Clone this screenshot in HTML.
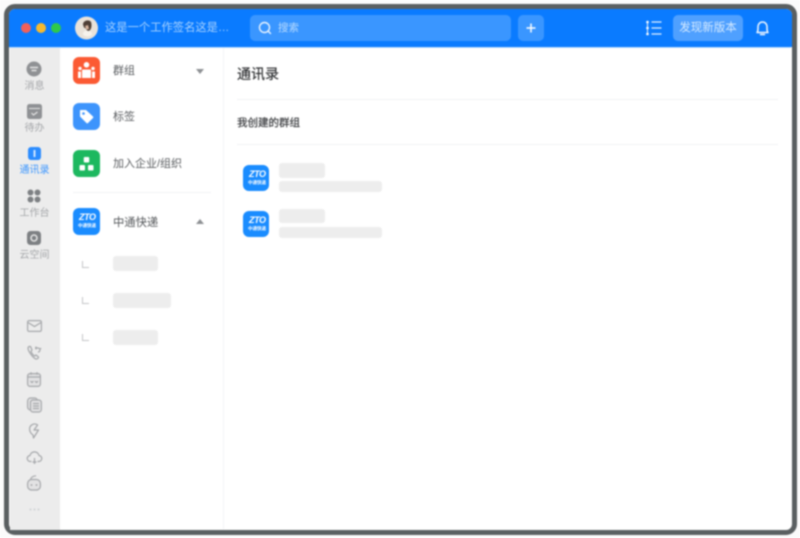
<!DOCTYPE html>
<html lang="zh">
<head>
<meta charset="utf-8">
<style>
html,body{margin:0;padding:0;background:#fff}
body{width:800px;height:538px;overflow:hidden;position:relative;font-family:"Liberation Sans","Noto Sans CJK SC",sans-serif}
#root{position:absolute;left:0;top:0;width:800px;height:538px;filter:blur(.85px);background:#fbfbfb}
.a{position:absolute}
.frame{left:3.5px;top:3.5px;width:793px;height:531px;box-sizing:border-box;border:5px solid #5a5f61;border-radius:11px;background:#fff;overflow:hidden}
.t{position:absolute;white-space:nowrap;line-height:16px}
.sk{position:absolute;background:#ededed;border-radius:3px}
.ln{position:absolute;height:1px;background:#f1f2f4}
.nav{position:absolute;left:9px;width:51px;text-align:center;font-size:10px;color:#a5a7aa;line-height:12px}
.l{position:absolute;left:82px;width:6px;height:6px;border-left:1.5px solid #c4c5c7;border-bottom:1.5px solid #c4c5c7}
svg{position:absolute;overflow:visible}
.ic{position:absolute;border-radius:6px}
.z{position:absolute;font-size:9px;line-height:9px;font-weight:bold;font-style:italic;color:#fff;letter-spacing:-.4px}
.zs{position:absolute;font-size:4.500px;line-height:5px;font-weight:bold;color:#fff;white-space:nowrap}
</style>
</head>
<body>
<div id="root">
<div class="a frame"></div>

<!-- top bar -->
<div class="a" style="left:8.500px;top:8.500px;width:783px;height:38.500px;background:#0a7bff;border-radius:6px 6px 0 0"></div>
<div class="a" style="left:9px;top:47px;width:782px;height:1px;background:#b9dcff"></div>
<div class="a" style="left:21px;top:23px;width:10px;height:10px;border-radius:50%;background:#f0605a"></div>
<div class="a" style="left:36px;top:23px;width:10px;height:10px;border-radius:50%;background:#f6b92d"></div>
<div class="a" style="left:51px;top:23px;width:10px;height:10px;border-radius:50%;background:#2fc94a"></div>
<svg style="left:75px;top:16px" width="23" height="24" viewBox="0 0 23 23">
<circle cx="11.500" cy="11.500" r="11.500" fill="#e9e2d9"/>
<path d="M8 18c0-3 2-4 4-4s5 1 5 4c-2 2.500-7 2.500-9 0z" fill="#f6f2ec"/>
<path d="M8 8c0-4 6-5.500 8-2.500 1 3 .5 7-1.500 8.500-2 1-3-.5-3.500-2L9 11z" fill="#4f3f35"/>
<path d="M10 9.500l3-1 1 4-2.500.5z" fill="#d8b39c"/>
</svg>
<div class="t" style="left:105px;top:20px;font-size:11.300px;color:#a8d2ff">这是一个工作签名这是…</div>
<div class="a" style="left:250px;top:15px;width:261px;height:26px;border-radius:5px;background:#3a96ff"></div>
<svg style="left:258px;top:21px" width="14" height="14" viewBox="0 0 14 14" fill="none" stroke="#e8f3ff" stroke-width="1.400"><circle cx="6.500" cy="6.500" r="5"/><path d="M10 10l2.500 2.500" stroke-linecap="round"/></svg>
<div class="t" style="left:278px;top:20px;font-size:10.500px;color:#b8dbff">搜索</div>
<div class="a" style="left:518px;top:15px;width:26px;height:26px;border-radius:5px;background:#3a96ff"></div>
<svg style="left:525px;top:22px" width="12" height="12" viewBox="0 0 12 12" stroke="#fff" stroke-width="1.500"><path d="M6 1.500v9M1.500 6h9"/></svg>
<svg style="left:646px;top:20px" width="16" height="16" viewBox="0 0 16 16" fill="none" stroke="#e6f2ff" stroke-width="1.300"><path d="M5.500 2h10M5.500 8h10M5.500 14h10"/><path d="M1.500 1v14" stroke-width="1"/><circle cx="1.500" cy="2" r="1.300" fill="#fff" stroke="none"/><circle cx="1.500" cy="8" r="1.300" fill="#fff" stroke="none"/><circle cx="1.500" cy="14" r="1.300" fill="#fff" stroke="none"/></svg>
<div class="a" style="left:673px;top:15px;width:70px;height:26px;border-radius:5px;background:#4fa0ff"></div>
<div class="t" style="left:673px;top:20px;width:70px;text-align:center;font-size:11.500px;color:#d6eaff">发现新版本</div>
<svg style="left:755px;top:20px" width="15" height="16" viewBox="0 0 15 16" fill="none" stroke="#f2f8ff" stroke-width="1.500"><path d="M2 12.500c1-1 1-2.500 1-5.500 0-3 2-5 4.500-5S12 4 12 7c0 3 0 4.500 1 5.500z" stroke-linejoin="round"/><path d="M5.500 14.500h4" stroke-linecap="round"/></svg>

<!-- left rail -->
<div class="a" style="left:9.500px;top:48px;width:50.500px;height:481.500px;background:#ececec"></div>

<svg style="left:26px;top:61px" width="16" height="16" viewBox="0 0 16 16"><circle cx="8" cy="8" r="7.500" fill="#8f9194"/><path d="M4 6.500h8M5.500 9.500h5" stroke="#e6e6e6" stroke-width="1.500"/></svg>
<div class="nav" style="top:81px">消息</div>
<svg style="left:27px;top:104px" width="15" height="15" viewBox="0 0 15 15"><rect width="15" height="15" rx="2.500" fill="#8f9194"/><path d="M2 4.500h11" stroke="#e6e6e6" stroke-width="1"/><path d="M4.500 9l2 2 4-3" stroke="#e6e6e6" stroke-width="1.200" fill="none"/></svg>
<div class="nav" style="top:123px">待办</div>
<svg style="left:28px;top:147px" width="13" height="13" viewBox="0 0 13 13"><rect width="13" height="13" rx="3" fill="#2b8cff"/><rect x="5.500" y="3" width="2" height="7" fill="#cfe5ff"/></svg>
<div class="nav" style="top:165px;color:#3d97ff">通讯录</div>
<svg style="left:27px;top:189px" width="14" height="14" viewBox="0 0 14 14" fill="#7d8083"><circle cx="3.500" cy="3.500" r="3"/><circle cx="10.500" cy="3.500" r="3"/><circle cx="3.500" cy="10.500" r="3"/><circle cx="10.500" cy="10.500" r="3"/></svg>
<div class="nav" style="top:208px">工作台</div>
<svg style="left:27px;top:231px" width="14" height="14" viewBox="0 0 14 14"><rect width="14" height="14" rx="3.500" fill="#7d8083"/><circle cx="7" cy="7" r="3" fill="none" stroke="#e6e6e6" stroke-width="1.500"/></svg>
<div class="nav" style="top:250px">云空间</div>

<svg style="left:27px;top:320px" width="15" height="12" viewBox="0 0 15 12" fill="none" stroke="#a5a7aa" stroke-width="1.200"><rect x=".6" y=".6" width="13.800" height="10.800" rx="1.500"/><path d="M1 2.500l6.500 4 6.500-4"/></svg>
<svg style="left:27px;top:345px" width="15" height="15" viewBox="0 0 15 15" fill="none" stroke="#a5a7aa" stroke-width="1.200"><path d="M2 1.500c-1.500 1-1 3.500 1 6.500s4 5.500 6 6c1.500.3 2.500-1 2.500-2l-2.500-2-1.500 1c-1-.5-3-3-3.500-4.500L5 5 3.500 1.500z"/><path d="M8 3h3a2 2 0 0 1 0 4M9 1.500v3M13.500 3l.5 1"/></svg>
<svg style="left:27px;top:372px" width="14" height="15" viewBox="0 0 14 15" fill="#e2e2e3" stroke="#a5a7aa" stroke-width="1.200"><rect x=".6" y="1.600" width="12.800" height="12.800" rx="2.500"/><path d="M.6 5h12.800M4 .3v2.500M10 .3v2.500M3.500 9l1.500 1.500L6.500 9M8 9l1.500 1.500L11 9" fill="none"/></svg>
<svg style="left:27px;top:397px" width="15" height="16" viewBox="0 0 15 16" fill="#e2e2e3" stroke="#a5a7aa" stroke-width="1.200"><rect x=".6" y="1" width="10" height="12" rx="3"/><rect x="3.500" y="3" width="10.800" height="12" rx="2.500"/><path d="M6 6.500h6M6 9h6M6 11.500h6" fill="none"/></svg>
<svg style="left:29px;top:423px" width="11" height="16" viewBox="0 0 11 16" fill="none" stroke="#a5a7aa" stroke-width="1.200"><path d="M4 12C1 10 .6 8 .6 6a5 5 0 0 1 8-4L5 7h4.500L4.500 15z" stroke-linejoin="round"/></svg>
<svg style="left:27px;top:450px" width="15" height="15" viewBox="0 0 15 15" fill="none" stroke="#a5a7aa" stroke-width="1.200"><path d="M4.500 11.500H3.500a3 3 0 0 1-.5-6 4.600 4.600 0 0 1 9 0 3 3 0 0 1-.5 6h-1"/><path d="M7.500 8v6M5.500 12h4"/></svg>
<svg style="left:27px;top:475px" width="14" height="16" viewBox="0 0 14 16" fill="#e2e2e3" stroke="#a5a7aa" stroke-width="1.200"><rect x=".6" y="4.500" width="12.800" height="10.500" rx="4"/><path d="M3.500 4.500C4 2.500 6 1 9 .8" fill="none"/><circle cx="4.500" cy="10" r=".8" fill="#8f9194" stroke="none"/><circle cx="9.500" cy="10" r=".8" fill="#8f9194" stroke="none"/></svg>
<svg style="left:29px;top:508px" width="11" height="3" viewBox="0 0 11 3" fill="#cfd0d2"><circle cx="1.500" cy="1.500" r="1"/><circle cx="5.500" cy="1.500" r="1"/><circle cx="9.500" cy="1.500" r="1"/></svg>

<!-- middle panel -->
<div class="a" style="left:223px;top:48px;width:1px;height:481px;background:#f3f4f6"></div>

<div class="ic" style="left:73px;top:57px;width:27px;height:27px;background:#fb5a33"></div>
<svg style="left:77px;top:61px" width="19" height="19" viewBox="0 0 19 19" fill="#fff"><circle cx="9.500" cy="3.800" r="2.800"/><circle cx="3" cy="7.500" r="1.700"/><circle cx="16" cy="7.500" r="1.700"/><path d="M6 8.500h7a1 1 0 0 1 1 1V17H5V9.500a1 1 0 0 1 1-1z"/><path d="M1 10.500h3V17H1zM15 10.500h3V17h-3z"/></svg>
<div class="t" style="left:113px;top:63px;font-size:11px;color:#5a5d60">群组</div>
<svg style="left:196px;top:69px" width="8" height="5" viewBox="0 0 8 5" fill="#8d9093"><path d="M0 0h8L4 5z"/></svg>

<div class="ic" style="left:73px;top:103px;width:27px;height:27px;background:#3d94fc"></div>
<svg style="left:79px;top:109px" width="15" height="15" viewBox="0 0 15 15" fill="#fff"><path d="M1 1.500a.5.500 0 0 1 .5-.5H7l7 6.500a1 1 0 0 1 0 1.500L9 14a1 1 0 0 1-1.500 0L1 7.500z"/><circle cx="4.500" cy="4.500" r="1.300" fill="#3d94fc"/></svg>
<div class="t" style="left:113px;top:109px;font-size:11px;color:#5a5d60">标签</div>

<div class="ic" style="left:73px;top:150px;width:27px;height:27px;background:#1db85f"></div>
<svg style="left:78px;top:155px" width="17" height="17" viewBox="0 0 17 17" fill="#fff"><rect x="5.750" y="2" width="5.500" height="5.500" rx="1"/><rect x="1.500" y="10" width="5.500" height="5.500" rx="1"/><rect x="10" y="10" width="5.500" height="5.500" rx="1"/></svg>
<div class="t" style="left:113px;top:156px;font-size:11px;color:#5a5d60">加入企业/组织</div>

<div class="ln" style="left:73px;top:192px;width:138px"></div>

<div class="ic" style="left:73px;top:208px;width:27px;height:27px;background:#1a8cff"></div>
<div class="z" style="left:79px;top:213px">ZTO</div>
<div class="zs" style="left:78px;top:223px">中通快递</div>
<div class="t" style="left:113px;top:215px;font-size:11.300px;color:#55585b">中通快递</div>
<svg style="left:196px;top:219px" width="8" height="5" viewBox="0 0 8 5" fill="#8d9093"><path d="M0 5h8L4 0z"/></svg>

<div class="l" style="top:261px"></div>
<div class="sk" style="left:113px;top:256px;width:45px;height:15px"></div>
<div class="l" style="top:297px"></div>
<div class="sk" style="left:113px;top:293px;width:58px;height:15px"></div>
<div class="l" style="top:334px"></div>
<div class="sk" style="left:113px;top:330px;width:45px;height:15px"></div>

<!-- content -->
<div class="t" style="left:237px;top:66px;font-size:14px;color:#2f3133;-webkit-text-stroke:.2px #2f3133">通讯录</div>
<div class="ln" style="left:237px;top:99px;width:541px"></div>
<div class="t" style="left:237px;top:115px;font-size:10.500px;color:#3c3e41;-webkit-text-stroke:.2px #3c3e41">我创建的群组</div>
<div class="ln" style="left:237px;top:144px;width:541px"></div>

<div class="ic" style="left:243px;top:165px;width:26px;height:26px;background:#1a8cff"></div>
<div class="z" style="left:249px;top:170px">ZTO</div>
<div class="zs" style="left:248px;top:180px">中通快递</div>
<div class="sk" style="left:279px;top:163px;width:46px;height:15px"></div>
<div class="sk" style="left:279px;top:181px;width:103px;height:11px"></div>

<div class="ic" style="left:243px;top:211px;width:26px;height:26px;background:#1a8cff"></div>
<div class="z" style="left:249px;top:216px">ZTO</div>
<div class="zs" style="left:248px;top:226px">中通快递</div>
<div class="sk" style="left:279px;top:209px;width:46px;height:14px"></div>
<div class="sk" style="left:279px;top:227px;width:103px;height:11px"></div>
</div>
</body>
</html>
